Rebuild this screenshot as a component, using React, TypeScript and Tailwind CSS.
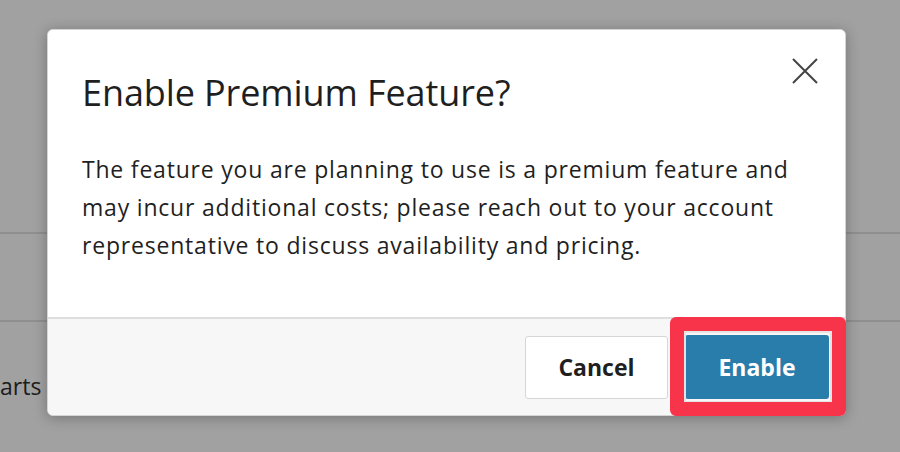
import React from "react";

export default function App() {
  const font = { fontFamily: '"Open Sans", "Liberation Sans", sans-serif' };
  return (
    <div className="relative w-[900px] h-[452px] overflow-hidden bg-[#a1a1a1]" style={font}>
      {/* underlying page */}
      <div className="flex flex-col">
        <div className="h-[232px]" />
        <div className="h-[2px] bg-[#8f8f8f]" />
        <div className="h-[86px]" />
        <div className="h-[2px] bg-[#8f8f8f]" />
        <div className="flex h-[130px] items-start pt-[49px]">
          <span className="text-[23px] leading-[30px] text-[#1c1c1c]">arts</span>
        </div>
      </div>

      {/* dialog */}
      <div className="absolute left-[47px] top-[29px] w-[799px] h-[387px] flex flex-col rounded-[6px] border border-[#d4d4d4] bg-white shadow-[0_2px_14px_rgba(0,0,0,0.28)] overflow-hidden">
        <div className="flex flex-1 flex-col bg-white px-[34px]">
          <div className="flex items-start justify-between">
            <h2 className="pt-[41px] text-[36px] leading-[44px] font-normal tracking-[-0.1px] text-[#1f1f1f]">Enable Premium Feature?</h2>
            <button className="mt-[28px] -mr-[7px] flex h-[26px] w-[26px] items-center justify-center text-[#444]">
              <svg width="26" height="26" viewBox="0 0 26 26" fill="none" stroke="currentColor" strokeWidth="2">
                <path d="M1 1 L25 25 M25 1 L1 25" />
              </svg>
            </button>
          </div>
          <p className="mt-[35px] text-[23px] leading-[38px] tracking-[0.8px] text-[#1f1f1f]">
            The feature you are planning to use is a premium feature and may incur additional costs; please reach out to your account representative to discuss availability and pricing.
          </p>
        </div>
        <div className="flex h-[98px] items-center justify-end gap-[17px] border-t-2 border-[#dedede] bg-[#f7f7f7] pr-[16px]">
          <button className="h-[63px] w-[143px] rounded-[3px] border border-[#d6d6d6] bg-white text-[23px] font-bold text-[#1f1f1f]">Cancel</button>
          <button className="h-[64px] w-[144px] rounded-[3px] bg-[#287dab] text-[23px] font-bold text-white">Enable</button>
        </div>
      </div>

      {/* highlight overlay */}
      <div className="absolute left-[670px] top-[317px] w-[176px] h-[99px] rounded-[6px] border-[14px] border-[#f8344a]">
        <div className="h-full w-full border-2 border-[#e4e4e4] border-b-[1px]" />
      </div>
    </div>
  );
}
